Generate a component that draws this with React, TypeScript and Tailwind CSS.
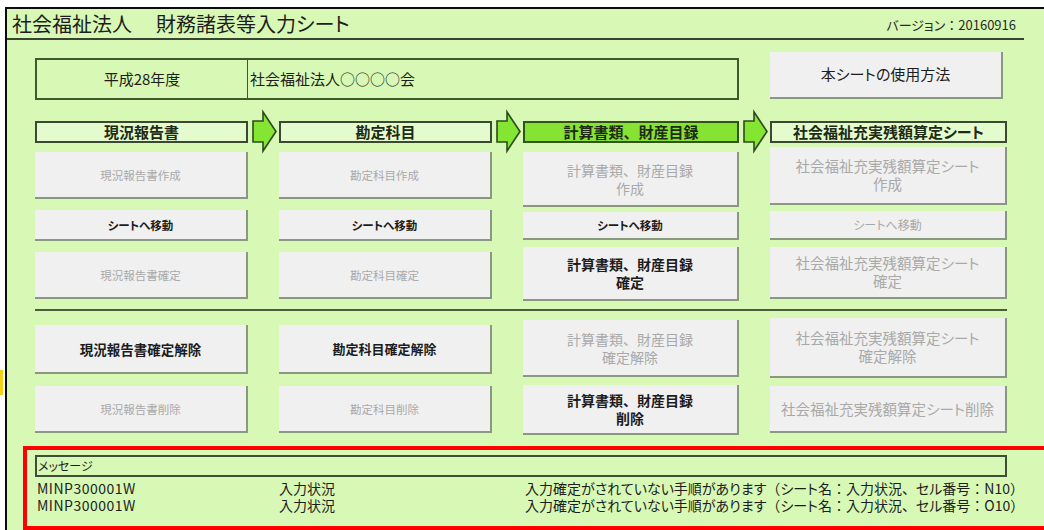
import React from "react";

const FONT = { fontFamily: '"Noto Sans CJK JP", "Noto Sans", sans-serif' };

// kana proportional (palt), but keep full-width punctuation at full width
function T({ s }: { s: string }) {
  const parts: React.ReactNode[] = [];
  let buf = "";
  let k = 0;
  for (const ch of s) {
    if ("（）：、".includes(ch)) {
      if (buf) parts.push(<span key={k++}>{buf}</span>);
      buf = "";
      parts.push(
        <span key={k++} className="[font-feature-settings:normal]">
          {ch}
        </span>
      );
    } else buf += ch;
  }
  if (buf) parts.push(<span key={k++}>{buf}</span>);
  return <span className="whitespace-nowrap [font-feature-settings:'palt']">{parts}</span>;
}

type Btn = { lines: string[]; on: boolean; h: number; mt: number; fs: number };

function Button({ b }: { b: Btn }) {
  return (
    <div
      className={`flex flex-col items-center justify-center bg-[#f0f0f0] border-r-2 border-b-2 border-[#8a9882] leading-[18px] ${
        b.on ? "text-[#1c1c1c] font-bold" : "text-[#a9a9a9]"
      }`}
      style={{ height: b.h, marginTop: b.mt, fontSize: b.fs }}
    >
      {b.lines.map((l, i) => (
        <T key={i} s={l} />
      ))}
    </div>
  );
}

function Arrow() {
  return (
    <div className="w-[31px] h-[35px] shrink-0">
      <svg width="31" height="41" viewBox="0 0 31 41" className="overflow-visible">
        <polygon
          points="5,10 15,10 15,1 28,20.5 15,40 15,31 5,31"
          fill="#84e632"
          stroke="#2e4a1c"
          strokeWidth="1.6"
          strokeLinejoin="miter"
        />
      </svg>
    </div>
  );
}

function Header({ label, w, active }: { label: string; w: number; active?: boolean }) {
  return (
    <div
      className={`mt-[10px] h-[22px] shrink-0 flex items-center justify-center text-[15px] font-bold text-[#1e2a14] border-2 ${
        active ? "bg-[#86e334] border-[#34521c]" : "bg-[#e3fbcd] border-[#3a4834]"
      }`}
      style={{ width: w }}
    >
      <T s={label} />
    </div>
  );
}

const colA: Btn[][] = [
  [
    { lines: ["現況報告書作成"], on: false, h: 47, mt: 6, fs: 11.5 },
    { lines: ["シートへ移動"], on: true, h: 31, mt: 11, fs: 11.5 },
    { lines: ["現況報告書確定"], on: false, h: 47, mt: 11, fs: 11.5 },
  ],
  [
    { lines: ["勘定科目作成"], on: false, h: 47, mt: 6, fs: 11.5 },
    { lines: ["シートへ移動"], on: true, h: 31, mt: 11, fs: 11.5 },
    { lines: ["勘定科目確定"], on: false, h: 47, mt: 11, fs: 11.5 },
  ],
  [
    { lines: ["計算書類、財産目録", "作成"], on: false, h: 55, mt: 6, fs: 14 },
    { lines: ["シートへ移動"], on: true, h: 28, mt: 5, fs: 11.5 },
    { lines: ["計算書類、財産目録", "確定"], on: true, h: 54, mt: 7, fs: 14 },
  ],
  [
    { lines: ["社会福祉充実残額算定シート", "作成"], on: false, h: 58, mt: 1, fs: 14.5 },
    { lines: ["シートへ移動"], on: false, h: 29, mt: 6, fs: 12 },
    { lines: ["社会福祉充実残額算定シート", "確定"], on: false, h: 52, mt: 7, fs: 14.5 },
  ],
];

const colB: Btn[][] = [
  [
    { lines: ["現況報告書確定解除"], on: true, h: 49, mt: 14, fs: 13.5 },
    { lines: ["現況報告書削除"], on: false, h: 47, mt: 12, fs: 11.5 },
  ],
  [
    { lines: ["勘定科目確定解除"], on: true, h: 49, mt: 14, fs: 13 },
    { lines: ["勘定科目削除"], on: false, h: 47, mt: 12, fs: 11.5 },
  ],
  [
    { lines: ["計算書類、財産目録", "確定解除"], on: false, h: 57, mt: 9, fs: 14 },
    { lines: ["計算書類、財産目録", "削除"], on: true, h: 50, mt: 8, fs: 14 },
  ],
  [
    { lines: ["社会福祉充実残額算定シート", "確定解除"], on: false, h: 60, mt: 7, fs: 14.5 },
    { lines: ["社会福祉充実残額算定シート削除"], on: false, h: 47, mt: 8, fs: 14.5 },
  ],
];

function Grid({ cols }: { cols: Btn[][] }) {
  return (
    <div className="grid grid-cols-[213px_213px_216px_237px] gap-x-[31px] items-start">
      {cols.map((c, i) => (
        <div key={i} className="flex flex-col">
          {c.map((b, j) => (
            <Button key={j} b={b} />
          ))}
        </div>
      ))}
    </div>
  );
}

export default function App() {
  return (
    <div className="w-[1044px] h-[530px] bg-white flex overflow-hidden" style={FONT}>
      <div className="w-[5px] shrink-0 flex flex-col">
        <div className="mt-[370px] w-[3px] h-[25px] bg-[#f2d21a]" />
      </div>
      <div className="flex-1 mt-[7px] border-t-2 border-l-2 border-[#0c0c0c] bg-[#d8f8b5] flex flex-col min-w-0">
        {/* title bar */}
        <div className="h-[31px] mr-[20px] border-b-2 border-[#39432f] flex items-center justify-between pl-[5px] pr-[8px]">
          <span className="text-[20px] text-[#1d1d1d] whitespace-pre [font-feature-settings:'palt']">
            社会福祉法人<span className="inline-block w-[24px]" />財務諸表等入力シート
          </span>
          <span className="text-[13px] text-[#2a2a2a] mt-[2px]">
            <T s="バージョン：20160916" />
          </span>
        </div>

        <div className="pl-[28px] flex flex-col">
          {/* header row */}
          <div className="mt-[12px] h-[48px] flex items-start">
            <div className="mt-[6px] w-[704px] h-[42px] border-2 border-[#3f5a2c] flex text-[15px] text-[#1d1d1d]">
              <div className="w-[211px] border-r border-[#3f5a2c] flex items-center justify-center">
                <T s="平成28年度" />
              </div>
              <div className="flex-1 flex items-center pl-[2px]">
                <T s="社会福祉法人○○○○会" />
              </div>
            </div>
            <div className="ml-[31px] w-[233px] h-[47px] bg-[#f0f0f0] border-r-2 border-b-2 border-[#8a9882] flex items-center justify-center text-[15px] text-[#1d1d1d]">
              <T s="本シートの使用方法" />
            </div>
          </div>

          {/* section headers */}
          <div className="mt-[11px] h-[35px] flex items-start">
            <Header label="現況報告書" w={213} />
            <Arrow />
            <Header label="勘定科目" w={213} />
            <Arrow />
            <Header label="計算書類、財産目録" w={216} active />
            <Arrow />
            <Header label="社会福祉充実残額算定シート" w={237} />
          </div>

          <Grid cols={colA} />

          <div className="mt-[8px] w-[972px] h-[2px] bg-[#4a5c3c]" />

          <Grid cols={colB} />
        </div>

        {/* messages */}
        <div className="mt-[11px] ml-[16px] -mr-[12px] h-[84px] border-4 border-[#ff0000] pl-[8px] pt-[5px] flex flex-col text-[14px] text-[#1d1d1d]">
          <div className="w-[972px] h-[22px] border-2 border-[#3f4f35] flex items-center pl-[1px] text-[12px] leading-none">
            <T s="メッセージ" />
          </div>
          <div className="mt-[3px] flex flex-col">
            {["N10", "O10"].map((c) => (
              <div key={c} className="flex h-[17px] items-center leading-[17px]">
                <span className="w-[244px] pl-[2px] tracking-[0.5px]">MINP300001W</span>
                <span className="w-[246px]">
                  <T s="入力状況" />
                </span>
                <T s={`入力確定がされていない手順があります（シート名：入力状況、セル番号：${c}）`} />
              </div>
            ))}
          </div>
        </div>
      </div>
    </div>
  );
}
